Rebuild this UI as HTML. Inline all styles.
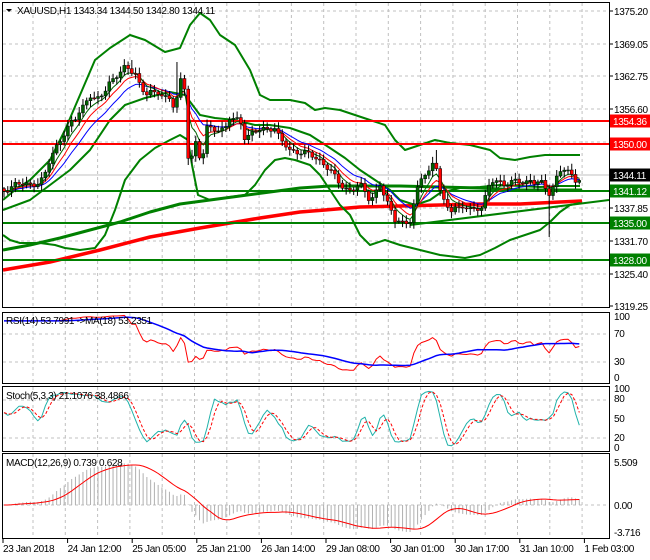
<!DOCTYPE html>
<html><head><meta charset="utf-8"><style>
html,body{margin:0;padding:0;background:#fff;width:650px;height:560px;overflow:hidden}
svg{display:block}
text{font-family:"Liberation Sans",sans-serif;font-size:10px;letter-spacing:-0.35px;fill:#000}
</style></head><body>
<svg id="s" width="650" height="560" xmlns="http://www.w3.org/2000/svg">
<rect width="650" height="560" fill="#fff"/>
<g id="grid" stroke="#c0c0c0" stroke-dasharray="3,3" stroke-width="1"></g>
<g id="main"></g>
<g id="frames" fill="none" stroke="#000" stroke-width="1">
<rect x="2.5" y="2.5" width="607" height="305"/>
<rect x="2.5" y="312.5" width="607" height="71"/>
<rect x="2.5" y="386.5" width="607" height="65"/>
<rect x="2.5" y="453.5" width="607" height="85"/>
</g>
<g id="labels"></g>
<polygon points="6,9 12,9 9,12" fill="#000"/>
<text x="17" y="14">XAUUSD,H1  1343.34 1344.50 1342.80 1344.11</text>
<text x="6" y="324">RSI(14) 53.7991  -&gt;MA(18) 53.2351</text>
<text x="6" y="399">Stoch(5,3,3) 21.1076 38.4866</text>
<text x="6" y="466">MACD(12,26,9) 0.739 0.628</text>
</svg>
<script>
const NS="http://www.w3.org/2000/svg";
const S=document.getElementById('s'),M=document.getElementById('main'),G=document.getElementById('grid'),L=document.getElementById('labels');
function el(p,t,a,txt){const e=document.createElementNS(NS,t);for(const k in a)e.setAttribute(k,a[k]);if(txt!==undefined)e.textContent=txt;p.appendChild(e);return e;}
function pl(p,pts,c,w,extra){const a={points:pts.map(q=>q[0].toFixed(1)+","+q[1].toFixed(1)).join(" "),fill:"none",stroke:c,"stroke-width":w,"stroke-linejoin":"round"};Object.assign(a,extra||{});return el(p,'polyline',a);}
const vx=[];for(let x=33;x<605;x+=32.3)vx.push(x);
const panels=[[3,307],[313,383],[387,451],[454,538]];
vx.forEach(x=>panels.forEach(p=>el(G,'line',{x1:x,y1:p[0],x2:x,y2:p[1]})));
[11,44,76,109,142,208,241,274].forEach(y=>el(G,'line',{x1:3,y1:y,x2:609,y2:y}));
[334,362].forEach(y=>el(G,'line',{x1:3,y1:y,x2:609,y2:y}));
[400,438].forEach(y=>el(G,'line',{x1:3,y1:y,x2:609,y2:y}));
el(G,'line',{x1:3,y1:505,x2:609,y2:505});
el(M,'line',{x1:3,y1:175,x2:609,y2:175,stroke:'#c0c0c0','stroke-width':1});
const K=[[4,190],[15,185],[40,183],[45,175],[50,160],[55,148],[60,140],[70,125],[75,120],[80,110],[90,95],[95,100],[100,100],[105,90],[110,80],[115,78],[120,72],[125,68],[130,72],[135,70],[140,85],[145,95],[150,92],[155,95],[160,92],[165,95],[170,100],[175,110],[180,80],[185,90],[188,155],[192,155],[195,140],[200,160],[205,150],[207,128],[215,128],[225,130],[230,118],[235,120],[240,118],[245,138],[250,135],[260,130],[265,128],[275,128],[280,140],[290,150],[300,152],[310,155],[320,160],[330,170],[340,185],[350,190],[360,185],[370,200],[380,185],[390,210],[395,220],[400,218],[405,225],[410,222],[415,200],[420,180],[425,172],[430,170],[435,160],[440,190],[445,205],[450,210],[455,205],[460,210],[465,208],[475,210],[482,205],[490,185],[495,180],[500,182],[505,185],[510,180],[515,182],[520,184],[530,180],[535,182],[540,180],[545,190],[550,195],[555,180],[560,170],[565,168],[570,175],[575,182],[580,178]];
function interp(x){for(let i=1;i<K.length;i++){if(x<=K[i][0]){const a=K[i-1],b=K[i];return a[1]+(b[1]-a[1])*(x-a[0])/(b[0]-a[0]);}}return K[K.length-1][1];}
const py=p=>11+(1375.2-p)*5.28, yp=y=>1375.2-(y-11)/5.28;
const N=154,X=[],C=[],O=[],H=[],Lo=[];
for(let i=0;i<N;i++){const x=4+i*3.76;X.push(x);const y=interp(x)+2*Math.sin(i*1.7)+1.5*Math.sin(i*0.9+1);C.push(yp(y));}
for(let i=0;i<N;i++){O.push(i?C[i-1]:C[0]+0.5);H.push(Math.max(O[i],C[i])+0.3+0.9*Math.abs(Math.sin(i*2.3)));Lo.push(Math.min(O[i],C[i])-0.3-0.9*Math.abs(Math.cos(i*1.9)));}
function idx(x){return Math.round((x-4)/3.76);}
Lo[idx(188)]=yp(165);H[idx(178)]=yp(62);Lo[idx(551)]=yp(237);H[idx(437)]=yp(150);H[idx(130)]=yp(60);
function ema(a,n){const k=2/(n+1);let r=[],v=a[0];a.forEach((x,i)=>{v=i?x*k+v*(1-k):x;r.push(v);});return r;}
function sma(a,n){return a.map((x,i)=>{let s=0,c=0;for(let j=Math.max(0,i-n+1);j<=i;j++){s+=a[j];c++;}return s/c;});}
pl(M,[[3,270],[50,262],[100,250],[150,237],[200,228],[230,223],[260,218],[300,212],[325,210],[360,207],[400,206],[440,205],[480,204],[520,204],[560,202],[582,201]],'#ff0000',3.5);
pl(M,[[3,250],[30,245],[60,238],[90,230],[120,222],[150,212],[180,204],[210,200],[240,196],[270,192],[300,188],[330,186],[360,186],[400,186],[440,187],[480,188],[520,190],[560,190],[582,190]],'#008000',3);
pl(M,[[3,200],[15,190],[30,180],[50,160],[65,130],[80,95],[95,60],[110,48],[130,35],[145,40],[165,52],[180,48],[190,25],[200,13],[210,20],[220,35],[235,45],[250,70],[260,95],[270,100],[290,100],[305,103],[315,110],[325,108],[340,110],[355,115],[370,120],[385,125],[395,140],[405,150],[420,145],[435,140],[450,143],[470,145],[490,150],[500,158],[515,160],[530,157],[545,155],[560,155],[580,155]],'#008000',2);
pl(M,[[3,235],[10,240],[20,243],[40,243],[55,245],[65,248],[80,250],[95,248],[105,235],[115,210],[125,180],[140,160],[155,148],[170,140],[180,135],[188,140],[192,165],[198,195],[210,200],[230,197],[245,195],[255,185],[265,170],[275,160],[285,158],[295,160],[310,165],[320,175],[330,190],[340,205],[350,215],[360,235],[370,245],[385,240],[400,245],[420,250],[440,255],[465,258],[480,255],[495,248],[510,240],[525,235],[540,230],[550,222],[560,212],[570,205],[580,203]],'#008000',2);
pl(M,[[3,210],[30,200],[50,185],[70,170],[90,150],[110,120],[125,105],[145,98],[170,92],[185,95],[200,115],[215,118],[235,120],[255,125],[270,125],[290,128],[310,135],[330,148],[345,158],[360,170],[375,180],[390,190],[400,200],[415,205],[430,200],[440,193],[460,188],[480,187],[500,185],[520,186],[540,187],[560,186],[580,186]],'#008000',2);
pl(M,[[410,225],[609,200]],'#008000',2);
[[121,'#ff0000'],[144,'#ff0000'],[191,'#008000'],[223,'#008000'],[260,'#008000']].forEach(l=>el(M,'line',{x1:3,y1:l[0],x2:609,y2:l[0],stroke:l[1],'stroke-width':2}));
const e1=ema(C,13),e2=ema(C,8),e3=ema(C,5);
pl(M,X.map((x,i)=>[x,py(e1[i])]),'#0000ff',1);
pl(M,X.map((x,i)=>[x,py(e2[i])]),'#ff0000',1);
pl(M,X.map((x,i)=>[x,py(e3[i])]),'#006400',1);
for(let i=0;i<N;i++){const x=X[i],up=C[i]>=O[i];el(M,'line',{x1:x,y1:py(H[i]),x2:x,y2:py(Lo[i]),stroke:'#000','stroke-width':1});
const t=py(Math.max(O[i],C[i])),b=py(Math.min(O[i],C[i]));el(M,'rect',{x:x-1.5,y:t,width:3,height:Math.max(1,b-t),fill:up?'#006400':'#ff0000',stroke:'#000','stroke-width':0.5});}
let ag=0,al=0;const R=[50];for(let i=1;i<N;i++){const d=C[i]-C[i-1];const g=Math.max(d,0),l=Math.max(-d,0);if(i<=14){ag+=g/14;al+=l/14;}else{ag=(ag*13+g)/14;al=(al*13+l)/14;}R.push(al===0?100:100-100/(1+ag/al));}
for(let i=0;i<14;i++)R[i]=R[14];
const RM=sma(R,18);
const ry=v=>383-0.7*v;
pl(M,X.map((x,i)=>[x,ry(R[i])]),'#ff0000',1);
pl(M,X.map((x,i)=>[x,ry(RM[i])]),'#0000ff',1.5);
const raw=C.map((c,i)=>{let hh=-1e9,ll=1e9;for(let j=Math.max(0,i-4);j<=i;j++){hh=Math.max(hh,H[j]);ll=Math.min(ll,Lo[j]);}return (c-ll)/(hh-ll)*100;});
const kk=sma(raw,3),dd=sma(kk,3),sy=v=>451-0.64*v;
pl(M,X.map((x,i)=>[x,sy(kk[i])]),'#20b2aa',1);
pl(M,X.map((x,i)=>[x,sy(dd[i])]),'#ff0000',1,{'stroke-dasharray':'3,2'});
const m12=ema(C,12),m26=ema(C,26),MD=m12.map((v,i)=>v-m26[i]),SG=sma(MD,9);
let mx=Math.max(...MD),mn=Math.min(...MD);const sc=Math.min(43/mx,27/-mn);
const my=v=>505-v*sc;
X.forEach((x,i)=>el(M,'line',{x1:x,y1:505,x2:x,y2:my(MD[i]),stroke:'#b0b0b0','stroke-width':1}));
pl(M,X.map((x,i)=>[x,my(SG[i])]),'#ff0000',1);
[[1375.20,11],[1369.05,44],[1362.75,76],[1356.60,109],[1337.85,208],[1331.70,241],[1325.40,274],[1319.25,306]].forEach(a=>{el(L,'line',{x1:609,y1:a[1],x2:613,y2:a[1],stroke:'#000'});el(L,'text',{x:614,y:a[1]+4},a[0].toFixed(2));});
[['1354.36',121,'#ff0000'],['1350.00',144,'#ff0000'],['1344.11',175,'#000'],['1341.12',191,'#008000'],['1335.00',223,'#008000'],['1328.00',260,'#008000']].forEach(a=>{el(L,'rect',{x:610,y:a[1]-6.5,width:40,height:13,fill:a[2]});el(L,'text',{x:613,y:a[1]+4,style:'fill:#fff'},a[0]);});
[['100',320],['70',337],['30',365],['0',381]].forEach(a=>el(L,'text',{x:614,y:a[1]},a[0]));
[['100',392],['80',402],['50',422],['20',441],['0',451]].forEach(a=>el(L,'text',{x:614,y:a[1]},a[0]));
[['5.509',466],['0.00',509],['-3.716',536]].forEach(a=>el(L,'text',{x:614,y:a[1]},a[0]));
['23 Jan 2018','24 Jan 12:00','25 Jan 05:00','25 Jan 21:00','26 Jan 14:00','29 Jan 08:00','30 Jan 01:00','30 Jan 17:00','31 Jan 10:00','1 Feb 03:00'].forEach((t,i)=>{const x=3+i*64.6;el(L,'line',{x1:x,y1:538,x2:x,y2:543,stroke:'#000'});el(L,'text',{x:x,y:552},t);});
</script>
</body></html>
